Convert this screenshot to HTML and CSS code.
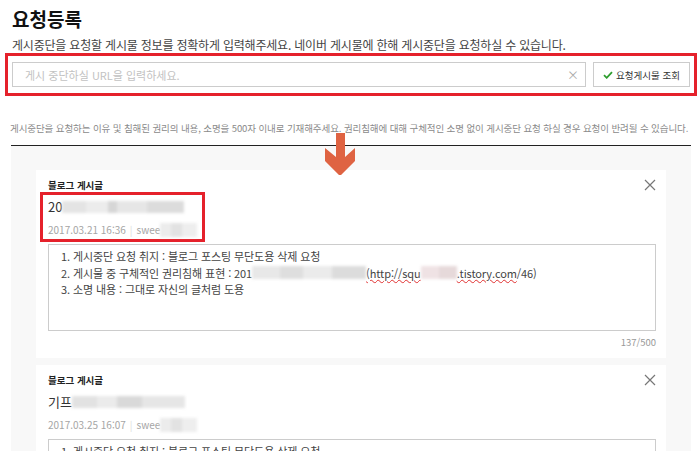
FILE: index.html
```html
<!DOCTYPE html>
<html lang="ko">
<head>
  <meta charset="UTF-8">
  <title>요청등록</title>
  <link rel="stylesheet" href="styles.css">
</head>
<body>
  <div class="page">
    <h1 class="title">요청등록</h1>
    <p class="desc">게시중단을 요청할 게시물 정보를 정확하게 입력해주세요. 네이버 게시물에 한해 게시중단을 요청하실 수 있습니다.</p>

    <div class="search-box">
      <div class="search-input">
        <span class="placeholder">게시 중단하실 URL을 입력하세요.</span>
        <span class="clear">×</span>
      </div>
      <button class="search-btn">
        <svg width="10" height="8" viewBox="0 0 10 8"><path d="M1 4.2 L3.7 6.8 L9 1.2" fill="none" stroke="#2f9e2f" stroke-width="1.8"/></svg>
        요청게시물 조회
      </button>
    </div>

    <p class="notice">게시중단을 요청하는 이유 및 침해된 권리의 내용, 소명을 500자 이내로 기재해주세요. 권리침해에 대해 구체적인 소명 없이 게시중단 요청 하실 경우 요청이 반려될 수 있습니다.</p>

    <div class="list">
      <svg class="arrow" width="30" height="42" viewBox="0 0 30 42">
        <polygon points="11,0 20,0 20,24 30,15 30,28 16,42 14,42 0,28 0,15 11,24" fill="#df6342"/>
      </svg>

      <div class="card">
        <div class="card-head">
          <span class="label">블로그 게시글</span>
          <svg class="close" width="12" height="12" viewBox="0 0 12 12"><path d="M1 1 L11 11 M11 1 L1 11" stroke="#777" stroke-width="1.2"/></svg>
        </div>
        <div class="info marked">
          <div class="post-title">20<span class="blur b1"></span></div>
          <div class="meta">2017.03.21 16:36<span class="bar">|</span>swee<span class="blur b2"></span></div>
        </div>
        <div class="memo">
          <p>1. 게시중단 요청 취지 : 블로그 포스팅 무단도용 삭제 요청</p>
          <p>2. 게시물 중 구체적인 권리침해 표현 : 201<span class="blur b3"></span><span class="spell">(http://squ</span><span class="blur b4"></span><span class="spell">.tistory.com</span>/46)</p>
          <p>3. 소명 내용 : 그대로 자신의 글처럼 도용</p>
        </div>
        <div class="count">137/500</div>
      </div>

      <div class="card">
        <div class="card-head">
          <span class="label">블로그 게시글</span>
          <svg class="close" width="12" height="12" viewBox="0 0 12 12"><path d="M1 1 L11 11 M11 1 L1 11" stroke="#777" stroke-width="1.2"/></svg>
        </div>
        <div class="info">
          <div class="post-title">기프<span class="blur b5"></span></div>
          <div class="meta">2017.03.25 16:07<span class="bar">|</span>swee<span class="blur b2"></span></div>
        </div>
        <div class="memo">
          <p>1. 게시중단 요청 취지 : 블로그 포스팅 무단도용 삭제 요청</p>
        </div>
      </div>
    </div>
  </div>
</body>
</html>
```

FILE: styles.css
```css
* {
  margin: 0;
  padding: 0;
  box-sizing: border-box;
}

html, body {
  height: 451px;
  overflow: hidden;
}

body {
  font-family: "Noto Sans CJK KR", "Noto Sans", sans-serif;
  color: #333;
  background: #fff;
}

.page {
  padding: 6px 3px 0 5px;
}

.title {
  font-size: 19px;
  line-height: 26px;
  font-weight: bold;
  color: #111;
  padding-left: 7px;
}

.desc {
  margin-top: 5px;
  padding-left: 7px;
  font-size: 12px;
  line-height: 16px;
  color: #444;
  letter-spacing: -0.2px;
}

.search-box {
  display: flex;
  gap: 7px;
  border: 3px solid #e5212b;
  padding: 6px 4px;
}

.search-input {
  flex: 1;
  height: 25px;
  border: 1px solid #ccc;
  display: flex;
  align-items: center;
  justify-content: space-between;
  padding: 0 6px 0 12px;
}

.placeholder {
  font-size: 11px;
  color: #c2c2c2;
}

.clear {
  font-size: 12px;
  color: #aaa;
}

.search-btn {
  width: 97px;
  height: 25px;
  border: 1px solid #ccc;
  background: #fff;
  font-family: inherit;
  font-size: 9.5px;
  color: #333;
  display: flex;
  align-items: center;
  justify-content: center;
  gap: 3px;
}

.notice {
  margin-top: 25px;
  padding-left: 5px;
  font-size: 9.5px;
  line-height: 14px;
  color: #8a8a8a;
  letter-spacing: -0.1px;
  white-space: nowrap;
}

.list {
  position: relative;
  margin: 10px 6px 0 6px;
  border-top: 1px solid #222;
  background: #f8f8f8;
  padding: 24px 25px 0 25px;
  height: 320px;
}

.arrow {
  position: absolute;
  left: 314px;
  top: -13px;
}

.card {
  background: #fff;
  padding: 8px 10px 9px 12px;
  margin-bottom: 7px;
}

.card-head {
  display: flex;
  justify-content: space-between;
  align-items: center;
  height: 14px;
}

.label {
  font-size: 9.5px;
  font-weight: bold;
  color: #222;
}

.info {
  width: 165px;
  margin-left: -8px;
  border: 3px solid transparent;
  padding: 3px 5px 1px 5px;
}

.info.marked {
  border-color: #e5212b;
}

.post-title {
  font-size: 13px;
  line-height: 18px;
  color: #333;
  display: flex;
  align-items: center;
  white-space: nowrap;
}

.meta {
  margin-top: 6px;
  font-size: 10px;
  line-height: 16px;
  color: #a5a5a5;
  display: flex;
  align-items: center;
  white-space: nowrap;
}

.bar {
  color: #ddd;
  margin: 0 4px;
}

.blur {
  display: inline-block;
  height: 12px;
  filter: blur(1.5px);
}

.b1 {
  width: 122px;
  background: linear-gradient(90deg, #e4e4e4 0 20%, #ececec 20% 38%, #d6d6d6 38% 45%, #e6e6e6 45% 70%, #dcdcdc 70% 100%);
}

.b2 {
  width: 44px;
  height: 14px;
  background: linear-gradient(90deg, #ececec 0 30%, #e2e2e2 30% 60%, #eeeeee 60% 100%);
}

.b3 {
  width: 114px;
  height: 13px;
  background: linear-gradient(90deg, #e8e8e8 0 25%, #dedede 25% 45%, #ebebeb 45% 70%, #dcdcdc 70% 100%);
}

.b4 {
  width: 36px;
  height: 13px;
  background: linear-gradient(90deg, #efe2e4 0 50%, #e6d9da 50% 100%);
}

.b5 {
  width: 113px;
  background: linear-gradient(90deg, #e2e2e2 0 22%, #ebebeb 22% 40%, #d9d9d9 40% 62%, #e6e6e6 62% 100%);
}

.memo {
  margin-top: 2px;
  height: 87px;
  border: 1px solid #ccc;
  padding: 3px 12px;
  font-size: 11px;
  line-height: 16.5px;
  color: #444;
  letter-spacing: -0.1px;
}

.memo p {
  display: flex;
  align-items: center;
  white-space: nowrap;
}

.spell {
  text-decoration: underline wavy #e03030;
  text-decoration-thickness: 1px;
}

.count {
  margin-top: 4px;
  text-align: right;
  font-size: 9.5px;
  line-height: 14px;
  color: #999;
}
```
